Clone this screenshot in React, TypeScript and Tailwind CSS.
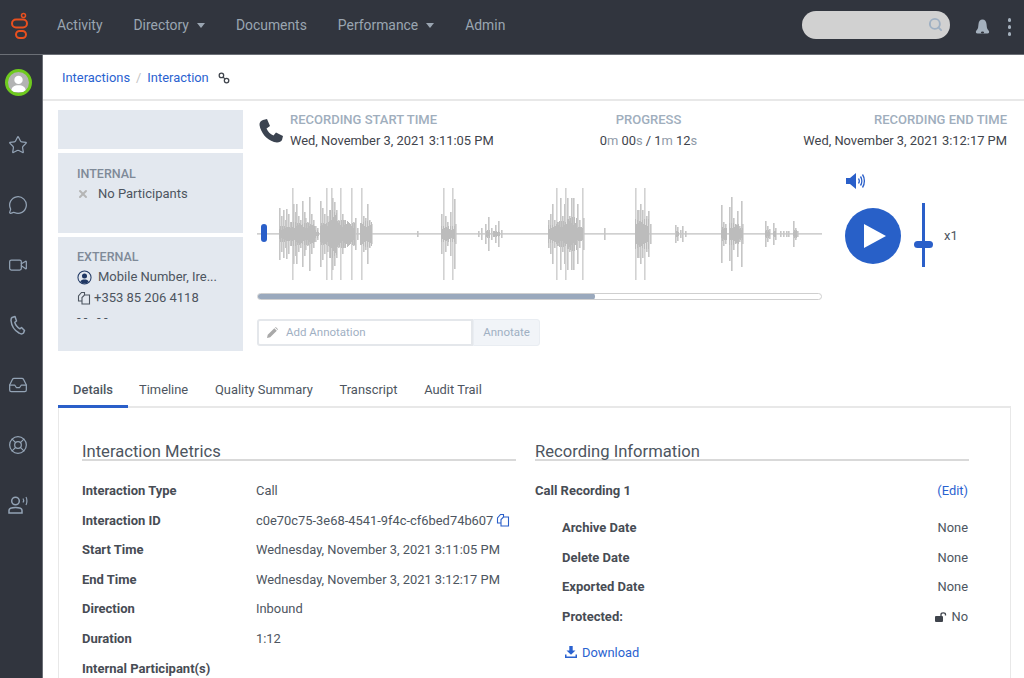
import { Inbox, LifeBuoy, MessageCircle, Search, Star, Video, X } from 'lucide-react';

// [x, half height] of the waveform, x measured from the left of the track
const BARS: [number, number][] = [
  [22, 26], [24, 18], [26, 24], [28, 14], [29, 25], [31, 20], [33, 12], [35, 46], [36, 30], [38, 22], [39, 30], [41, 18], [43, 14], [45, 33], [47, 22], [48, 16], [50, 12], [52, 37], [54, 20], [56, 14], [58, 8],
  [60, 6], [63, 33], [65, 26], [67, 20], [69, 46], [70, 18], [72, 24], [74, 46], [75, 36], [77, 32], [79, 24], [81, 14], [83, 46], [85, 20], [87, 14], [89, 10], [91, 6], [94, 46], [96, 12], [98, 16], [100, 6],
  [103, 6], [104, 46], [106, 18], [108, 16], [110, 30], [112, 14], [114, 10],
  [160, 3],
  [184, 20], [186, 46], [188, 18], [190, 12], [193, 22], [195, 46], [197, 35], [198, 10],
  [221, 3], [224, 6], [228, 10], [231, 17], [234, 6], [238, 9], [241, 13], [244, 4],
  [291, 14], [293, 20], [295, 30], [297, 14], [299, 46], [301, 12], [303, 36], [305, 18], [307, 30], [308, 46], [310, 36], [312, 18], [314, 36], [316, 36], [318, 10], [320, 30], [322, 14], [325, 46], [326, 16],
  [347, 6],
  [378, 46], [380, 24], [381, 24], [383, 30], [385, 24], [387, 46], [389, 18], [391, 23], [393, 10],
  [418, 9], [420, 7], [423, 4], [425, 8], [428, 3],
  [464, 29], [466, 12], [468, 10], [472, 27], [474, 37], [476, 16], [478, 10], [480, 23], [482, 8], [484, 33], [485, 10],
  [508, 13], [510, 8], [512, 5], [516, 11], [518, 6], [523, 3], [526, 3], [529, 3], [531, 3], [536, 13], [538, 6], [540, 3],
];

// louder stretches: [from, to, half height], drawn as a tight comb so the edge stays spiky
const CORES: [number, number, number][] = [
  [22, 34, 8], [34, 43, 12], [43, 58, 11], [58, 62, 4], [63, 72, 12], [72, 80, 24], [80, 93, 14], [93, 98, 11], [103, 115, 13],
  [184, 198, 8],
  [229, 233, 4], [236, 243, 3],
  [291, 299, 9], [299, 310, 13], [310, 320, 17], [320, 326, 8],
  [378, 392, 15],
  [419, 422, 3],
  [464, 470, 7], [472, 482, 11], [482, 486, 6],
  [508, 513, 4], [516, 519, 3], [536, 540, 4],
];

const COMB = CORES.flatMap(([from, to, h]) =>
  Array.from({ length: to - from }, (_, i) => {
    const x = from + i;
    return { x, h: Math.round(h * (0.5 + 0.5 * Math.abs(Math.sin(x * 1.7)))) };
  })
);

const METRICS: [string, string][] = [
  ['Interaction Type', 'Call'],
  ['Interaction ID', 'c0e70c75-3e68-4541-9f4c-cf6bed74b607'],
  ['Start Time', 'Wednesday, November 3, 2021 3:11:05 PM'],
  ['End Time', 'Wednesday, November 3, 2021 3:12:17 PM'],
  ['Direction', 'Inbound'],
  ['Duration', '1:12'],
  ['Internal Participant(s)', ''],
];

function CopyIcon({ className }: { className: string }) {
  return (
    <svg viewBox="0 0 14 14" fill="none" stroke="currentColor" strokeWidth="1.1" className={className}>
      <path d="M5 10H1.5V5L4.5 1.5H7.5V4" />
      <path d="M5 13V6.5L7.5 4H12.5V13Z" />
    </svg>
  );
}

function Caret() {
  return <span className="ml-2 mt-0.5 border-x-[4.5px] border-t-[5px] border-x-transparent border-t-[#9aa5b1]" />;
}

function Logo() {
  return (
    <svg viewBox="0 0 20 30" fill="none" stroke="#e8501f" strokeWidth="2" className="h-[30px] w-5">
      <circle cx="13.5" cy="3.5" r="2" strokeWidth="1.5" />
      <rect x="2" y="7.5" width="15" height="8" rx="4" />
      <rect x="6" y="19" width="10" height="7" rx="3.5" />
    </svg>
  );
}

function TopBar() {
  return (
    <header className="flex h-[55px] shrink-0 items-center border-b border-[#6b6f76] bg-[#31353e] pl-2.5 text-[13.9px] text-[#9aa5b1]">
      <div className="w-[47px]"><Logo /></div>
      <nav className="mb-[4px] flex items-center gap-[31px]">
        <span>Activity</span>
        <span className="flex items-center">Directory<Caret /></span>
        <span>Documents</span>
        <span className="flex items-center">Performance<Caret /></span>
        <span>Admin</span>
      </nav>
      <div className="mb-[5px] ml-auto flex h-[28px] w-[148px] items-center justify-end rounded-full bg-[#d1d1d1] pr-[7px]">
        <Search size={15} strokeWidth={3} className="text-[#9fb0c3]" />
      </div>
      <svg viewBox="0 0 14 16" fill="#a5b1be" className="ml-[25px] h-4 w-[15px]">
        <path d="M7 .5C4.6 .5 3.2 2.4 3 5L2.6 8.5C2.4 10 1.2 11 .6 12C0 13 .5 14.5 2 14.5H12C13.5 14.5 14 13 13.4 12C12.8 11 11.6 10 11.4 8.5L11 5C10.8 2.4 9.4 .5 7 .5Z" />
        <ellipse cx="7" cy="13.4" rx="1.6" ry="1" fill="#31353e" />
      </svg>
      <div className="mr-[13px] ml-[18px] flex flex-col gap-[3.5px]">
        <span className="size-[3.5px] rounded-full bg-[#a5b1be]" />
        <span className="size-[3.5px] rounded-full bg-[#a5b1be]" />
        <span className="size-[3.5px] rounded-full bg-[#a5b1be]" />
      </div>
    </header>
  );
}

function SideBar() {
  const icon = 'text-[#93a3b5]';
  return (
    <aside className="flex w-[43px] shrink-0 flex-col items-center border-r border-[#6b6f76] bg-[#31353e] pr-[6px] pt-[14px]">
      <div className="flex size-[27px] items-center justify-center overflow-hidden rounded-full border-[3px] border-[#6fca1f] bg-[#b3b3b3]">
        <svg viewBox="0 0 20 20" fill="#fff" className="size-[21px]">
          <circle cx="10" cy="7.5" r="4" />
          <path d="M3 19C3 14 6 12.5 10 12.5S17 14 17 19Z" />
        </svg>
      </div>
      <div className="mt-[39px] flex flex-col items-center gap-[40px]">
        <Star size={20} strokeWidth={1.5} className={icon} />
        <MessageCircle size={20} strokeWidth={1.5} className={icon} />
        <Video size={20} strokeWidth={1.5} className={icon} />
        <svg viewBox="0 0 20 20" fill="none" stroke="currentColor" strokeWidth="1.5" strokeLinejoin="round" className={`size-5 ${icon}`}>
          <path d="M4 2.5L7 1.5L8.5 6L6.8 7.3C7.5 10 9.5 12.5 12 13.8L13.5 12.5L16.5 15.5L15.5 18C14.5 19 12.5 19 11 18C6.5 15.5 3.5 10.5 3 5.5C3 4 3.2 3 4 2.5Z" />
        </svg>
        <Inbox size={20} strokeWidth={1.5} className={icon} />
        <LifeBuoy size={20} strokeWidth={1.5} className={icon} />
        <svg viewBox="0 0 20 20" fill="none" stroke="currentColor" strokeWidth="1.5" className={`size-5 ${icon}`}>
          <circle cx="7.5" cy="6" r="3.8" />
          <path d="M1 18V15.5C1 13.5 3 12.5 7.5 12.5S14 13.5 14 15.5V18Z" />
          <path d="M15 3.5C15.7 4.5 15.7 6.5 15 7.5M18 2C19.2 4 19.2 8 18 10" strokeWidth="1.2" />
        </svg>
      </div>
    </aside>
  );
}

function Participants() {
  return (
    <div className="flex w-[185px] shrink-0 flex-col gap-1 text-[13px] text-[#4d5560]">
      <div className="h-[39px] bg-[#e3e8ef]" />
      <div className="h-[80px] bg-[#e3e8ef] px-[19px] pt-[11px]">
        <div className="text-[12.5px] font-medium leading-[20px] text-[#7f8a98]">INTERNAL</div>
        <div className="flex h-5 items-center">
          <X size={12} strokeWidth={4} className="mr-[9px] text-[#b5b5b5]" />
          No Participants
        </div>
      </div>
      <div className="h-[114px] bg-[#e3e8ef] px-[19px] pt-[10px]">
        <div className="text-[12.5px] font-medium leading-[20px] text-[#7f8a98]">EXTERNAL</div>
        <div className="flex h-5 items-center">
          <svg viewBox="0 0 16 16" className="mr-1.5 size-[15px]">
            <circle cx="8" cy="8" r="7" fill="none" stroke="#1f3763" strokeWidth="1.1" />
            <circle cx="8" cy="6.3" r="2.7" fill="#1f3763" />
            <path d="M3.5 12.5C4 10.5 6 10 8 10S12 10.5 12.5 12.5C11 14 9.5 14.4 8 14.4S5 14 3.5 12.5Z" fill="#1f3763" />
          </svg>
          Mobile Number, Ire...
        </div>
        <div className="flex h-[21px] items-center">
          <CopyIcon className="mr-[3px] size-[14px] text-[#4d5560]" />
          +353 85 206 4118
        </div>
        <div className="h-5 leading-5">- -&nbsp;&nbsp;&nbsp;- -</div>
      </div>
    </div>
  );
}

function Waveform() {
  return (
    <div className="relative h-[96px] w-[565px]">
      <svg viewBox="0 0 565 96" className="h-[96px] w-[565px]">
        <rect x="0" y="47.3" width="565" height="1.2" fill="#bdbdbd" />
        {BARS.map(([x, h]) => (
          <rect key={x} x={x} y={48 - h} width="1.6" height={h * 2} fill={h === 46 ? '#d2d2d2' : '#c6c6c6'} />
        ))}
        {COMB.map(({ x, h }) => (
          <rect key={x} x={x} y={48 - h} width="1" height={h * 2} fill="#bcbcbc" />
        ))}
      </svg>
      <div className="absolute top-[38px] left-1 h-[18px] w-[6px] rounded-[3px] bg-[#2a5fc9]" />
    </div>
  );
}

function Player() {
  return (
    <div className="min-w-0 flex-1">
      <div className="mr-1 flex justify-between">
        <div className="flex">
          <svg viewBox="0 0 24 24" fill="#3b4350" className="mt-[9px] mr-[7px] ml-0.5 size-6">
            <path d="M4 1L8 0L11 7L7.5 9.5C9 13 11 15 14.5 16.5L17 13.5L24 17L23 21C22 23 19 24 15 23C7 20 2 14 .5 6C.2 3.5 2 1.5 4 1Z" />
          </svg>
          <div>
            <div className="text-[13px] font-medium leading-[20px] text-[#a0aebd]">RECORDING START TIME</div>
            <div className="text-[12.9px] leading-[21px] text-[#3f444c]">Wed, November 3, 2021 3:11:05 PM</div>
          </div>
        </div>
        <div className="text-center">
          <div className="text-[13px] font-medium leading-[20px] text-[#a0aebd]">PROGRESS</div>
          <div className="text-[12.9px] leading-[21px] text-[#3f444c]">
            0<span className="text-[#8f9aa7]">m</span> 00<span className="text-[#8f9aa7]">s</span> / 1<span className="text-[#8f9aa7]">m</span> 12<span className="text-[#8f9aa7]">s</span>
          </div>
        </div>
        <div className="text-right">
          <div className="text-[13px] font-medium leading-[20px] text-[#a0aebd]">RECORDING END TIME</div>
          <div className="text-[12.9px] leading-[21px] text-[#3f444c]">Wed, November 3, 2021 3:12:17 PM</div>
        </div>
      </div>

      <div className="mt-4 flex">
        <div className="w-[565px] pt-[19px]">
          <Waveform />
          <div className="mt-[11px] h-[7px] overflow-hidden rounded-full border border-[#cfcfcf]">
            <div className="-m-px h-[7px] w-[338px] rounded-full bg-[#9aa9bd]" />
          </div>
        </div>
        <div className="ml-[23px]">
          <svg viewBox="0 0 22 20" fill="none" stroke="#2a5fc9" className="mt-1 h-5 w-[22px]">
            <path d="M1 7H5L11 2V18L5 13H1Z" fill="#2a5fc9" strokeWidth="0" />
            <path d="M13.5 7.5C14.5 9 14.5 11 13.5 12.5M15.5 5.5C17.3 8 17.3 12 15.5 14.5M17.5 3.5C20 7 20 13 17.5 16.5" strokeWidth="1.3" />
          </svg>
          <div className="mt-[17px] flex size-14 items-center justify-center rounded-full bg-[#2860c8]">
            <svg viewBox="0 0 22 24" fill="#fff" className="ml-1 h-6 w-[22px]">
              <path d="M0 0L22 12L0 24Z" />
            </svg>
          </div>
        </div>
        <div className="relative mt-[36px] ml-[13px] flex h-[64px] w-[19px] justify-center">
          <div className="h-full w-[3px] bg-[#2a5fc9]" />
          <div className="absolute top-[38px] h-[7px] w-[19px] rounded-full bg-[#2a5fc9]" />
        </div>
        <div className="mt-[59px] ml-[11px] text-[13px] leading-5 text-[#4d5560]">x1</div>
      </div>

      <div className="mt-[19px] flex h-[27px] w-[283px] text-[11.5px] text-[#9fb0c3]">
        <div className="flex w-[216px] items-center rounded-l-[3px] border-2 border-[#e4e7eb] bg-white pl-2">
          <svg viewBox="0 0 12 12" fill="#a9a9a9" className="mr-2 size-[11px]">
            <path d="M0 12L.8 8.5 8 1.3 10.7 4 3.5 11.2ZM8.8.5 9.6 0 12 2.4 11.5 3.2Z" />
          </svg>
          Add Annotation
        </div>
        <div className="flex flex-1 items-center justify-center rounded-r-[3px] border border-[#e9edf2] bg-[#f1f4f8]">Annotate</div>
      </div>
    </div>
  );
}

function Tabs() {
  return (
    <div className="mt-6 flex h-[33px] border-b-2 border-[#e8e8e8] text-[12.9px] leading-[30px] text-[#4d5560]">
      <div className="-mb-0.5 h-[33px] w-[70px] border-b-[3px] border-[#2a5fc9] text-center font-medium">Details</div>
      <div className="ml-[11px] flex gap-[26.8px]">
        <span>Timeline</span>
        <span>Quality Summary</span>
        <span>Transcript</span>
        <span>Audit Trail</span>
      </div>
    </div>
  );
}

function Details() {
  return (
    <div className="grid grid-cols-[434px_434px] gap-[19px] border-x border-[#e8e8e8] pt-[31px] pl-[23px] text-[12.9px] text-[#4d5560]">
      <section>
        <h2 className="h-[22px] border-b-2 border-[#d9d9d9] text-[16.6px] leading-[25px] text-[#4d5560]">Interaction Metrics</h2>
        <div className="mt-[15px]">
          {METRICS.map(([label, value], i) => (
            <div key={label} className="flex h-[29.6px] items-center">
              <span className="w-[174px] shrink-0 text-[13px] font-bold text-[#474c54]">{label}</span>
              <span>{value}</span>
              {i === 1 && <CopyIcon className="ml-[3px] size-[14px] text-[#2a5fc9]" />}
            </div>
          ))}
        </div>
      </section>
      <section>
        <h2 className="h-[22px] border-b-2 border-[#d9d9d9] text-[16.6px] leading-[25px] text-[#4d5560]">Recording Information</h2>
        <div className="mt-[15px] flex h-[29.6px] items-center justify-between">
          <span className="text-[13px] font-bold text-[#474c54]">Call Recording 1</span>
          <span className="mr-px text-[#2a62d0]">(Edit)</span>
        </div>
        <div className="mt-[7.5px] pl-[27px]">
          {['Archive Date', 'Delete Date', 'Exported Date'].map(label => (
            <div key={label} className="flex h-[29.6px] items-center justify-between">
              <span className="text-[13px] font-bold text-[#474c54]">{label}</span>
              <span className="mr-px">None</span>
            </div>
          ))}
          <div className="flex h-[29.6px] items-center justify-between">
            <span className="text-[13px] font-bold text-[#474c54]">Protected:</span>
            <span className="mr-px flex items-center">
              <svg viewBox="0 0 12 10" className="mr-1 h-[10px] w-[12px]">
                <rect x="0" y="4" width="8" height="6" rx="1" fill="#3f444c" />
                <path d="M6 4V2.5C6 .4 10.5 .4 10.5 2.5V3.5" fill="none" stroke="#3f444c" strokeWidth="1.3" />
              </svg>
              No
            </span>
          </div>
          <div className="mt-[6px] ml-[3px] flex h-[29.6px] items-center text-[#2a62d0]">
            <svg viewBox="0 0 12 12" fill="#2a62d0" className="mr-[5px] size-3">
              <path d="M4.3 0H7.7V4.5H10.5L6 8.8 1.5 4.5H4.3Z" />
              <path d="M0 8.5H1.5V10.5H10.5V8.5H12V12H0Z" />
            </svg>
            Download
          </div>
        </div>
      </section>
    </div>
  );
}

export default function App() {
  return (
    <div className="flex h-[678px] w-[1024px] flex-col overflow-hidden bg-white font-['Roboto',sans-serif]">
      <TopBar />
      <div className="flex min-h-0 flex-1">
        <SideBar />
        <main className="min-w-0 flex-1">
          <div className="flex h-[46px] items-center border-b-2 border-[#e8e8e8] pt-[2px] pl-[19px] text-[12.9px] text-[#2a62d0]">
            <span>Interactions</span>
            <span className="mx-[6px] text-[#c4c4c4]">/</span>
            <span>Interaction</span>
            <svg viewBox="0 0 14 14" fill="none" stroke="#3f444c" strokeWidth="1.5" className="ml-[9px] size-3">
              <circle cx="4" cy="4" r="2.6" />
              <circle cx="10" cy="10" r="2.6" />
              <path d="M6 6L8 8" />
            </svg>
          </div>
          <div className="mr-[13px] ml-[15px]">
            <div className="flex gap-[14px] pt-[9px]">
              <Participants />
              <Player />
            </div>
            <Tabs />
            <Details />
          </div>
        </main>
      </div>
    </div>
  );
}
